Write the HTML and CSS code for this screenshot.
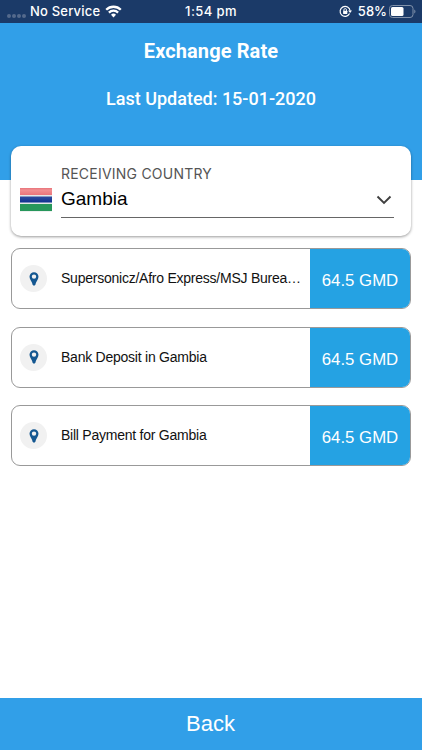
FILE: index.html
```html
<!DOCTYPE html>
<html lang="en">
<head>
    <meta charset="UTF-8">
    <meta name="viewport" content="width=device-width, initial-scale=1.0">
    <title>Exchange Rate</title>
    <link rel="stylesheet" href="styles.css">
</head>
<body>
    <div class="screen">
        <div class="status-bar">
            <div class="status-left">
                <span class="signal"><i></i><i></i><i></i><i></i></span>
                <span class="carrier">No Service</span>
                <svg class="wifi" width="17" height="13" viewBox="0 0 17 13" fill="none" stroke="#fff" stroke-width="2.3">
                    <path d="M1.2 4.8a10.3 10.3 0 0 1 14.6 0"/>
                    <path d="M3.9 7.6a6.5 6.5 0 0 1 9.2 0"/>
                    <path d="M8.5 12.4 6 9.8a3.6 3.6 0 0 1 5 0z" fill="#fff" stroke="none"/>
                </svg>
            </div>
            <div class="status-time">1:54 pm</div>
            <div class="status-right">
                <svg class="lock" width="13" height="13" viewBox="0 0 13 13" fill="none" stroke="#fff" stroke-width="1.2">
                    <path d="M10.6 8.6a5 5 0 1 1 .5-2.8"/>
                    <path d="M9.1 5.4h3.9l-1.9 2.5z" fill="#fff" stroke="none"/>
                    <rect x="4.1" y="5.8" width="4.2" height="3.2" rx=".4" fill="#fff" stroke="none"/>
                    <path d="M4.9 6V4.9a1.3 1.3 0 0 1 2.6 0V6" stroke-width=".9"/>
                </svg>
                <span class="percent">58%</span>
                <svg class="battery" width="28" height="13" viewBox="0 0 28 13">
                    <rect x=".5" y=".5" width="23.5" height="12" rx="3" fill="none" stroke="#8292ab"/>
                    <rect x="2" y="2" width="12.5" height="9" rx="1.5" fill="#fff"/>
                    <path d="M25.3 4.5c1.5.5 1.5 3.5 0 4z" fill="#8292ab"/>
                </svg>
            </div>
        </div>

        <div class="header">
            <h1 class="title">Exchange Rate</h1>
            <p class="updated">Last Updated: 15-01-2020</p>
        </div>

        <div class="country-card">
            <svg class="flag" width="34" height="26" viewBox="0 0 34 26">
                <defs>
                    <linearGradient id="red" x2="0" y2="1">
                        <stop offset="0" stop-color="#e8737a"/>
                        <stop offset=".3" stop-color="#f18f92"/>
                        <stop offset="1" stop-color="#ea757b"/>
                    </linearGradient>
                    <linearGradient id="blue" x2="0" y2="1">
                        <stop offset="0" stop-color="#2f4c9e"/>
                        <stop offset="1" stop-color="#0f3190"/>
                    </linearGradient>
                </defs>
                <rect x="1" y="1" width="32" height="23.6" fill="#e4e8e8"/>
                <rect x="1" y="1" width="32" height="7" fill="url(#red)"/>
                <rect x="1" y="9.5" width="32" height="6" fill="url(#blue)"/>
                <rect x="1" y="17" width="32" height="7" fill="#27975b"/>
            </svg>
            <div class="select">
                <span class="select-label">RECEIVING COUNTRY</span>
                <div class="select-row">
                    <span class="select-value">Gambia</span>
                    <svg width="16" height="10" viewBox="0 0 16 10" fill="none" stroke="#3f3f3f" stroke-width="1.9">
                        <path d="M1.5 1.5 8 8l6.5-6.5"/>
                    </svg>
                </div>
            </div>
        </div>

        <div class="rates">
            <div class="rate">
                <span class="pin">
                    <svg width="10" height="14" viewBox="0 0 10 14">
                        <path fill="#145791" fill-rule="evenodd" d="M5 .3A4.5 4.5 0 0 0 .5 4.700C.5 7.600 3.300 9.800 3.700 13Q5 14.200 6.300 13C6.700 9.800 9.500 7.600 9.500 4.700A4.500 4.500 0 0 0 5 .3zM5 2.400A2.200 2.200 0 1 1 5 6.800 2.200 2.200 0 0 1 5 2.400z"/>
                    </svg>
                </span>
                <span class="rate-name">Supersonicz/Afro Express/MSJ Burea…</span>
                <span class="rate-value">64.5 GMD</span>
            </div>
            <div class="rate">
                <span class="pin">
                    <svg width="10" height="14" viewBox="0 0 10 14">
                        <path fill="#145791" fill-rule="evenodd" d="M5 .3A4.5 4.5 0 0 0 .5 4.700C.5 7.600 3.300 9.800 3.700 13Q5 14.200 6.300 13C6.700 9.800 9.500 7.600 9.500 4.700A4.500 4.500 0 0 0 5 .3zM5 2.400A2.200 2.200 0 1 1 5 6.800 2.200 2.200 0 0 1 5 2.400z"/>
                    </svg>
                </span>
                <span class="rate-name">Bank Deposit in Gambia</span>
                <span class="rate-value">64.5 GMD</span>
            </div>
            <div class="rate">
                <span class="pin">
                    <svg width="10" height="14" viewBox="0 0 10 14">
                        <path fill="#145791" fill-rule="evenodd" d="M5 .3A4.5 4.5 0 0 0 .5 4.700C.5 7.600 3.300 9.800 3.700 13Q5 14.200 6.300 13C6.700 9.800 9.500 7.600 9.500 4.700A4.500 4.500 0 0 0 5 .3zM5 2.400A2.200 2.200 0 1 1 5 6.800 2.200 2.200 0 0 1 5 2.400z"/>
                    </svg>
                </span>
                <span class="rate-name">Bill Payment for Gambia</span>
                <span class="rate-value">64.5 GMD</span>
            </div>
        </div>

        <button class="back">Back</button>
    </div>
</body>
</html>
```
FILE: styles.css
```css
* {
    box-sizing: border-box;
}

body {
    margin: 0;
    background: #fff;
    font-family: "Liberation Sans", Arial, sans-serif;
    color: #111;
}

.screen {
    display: flex;
    flex-direction: column;
    height: 750px;
    overflow: hidden;
}

/* Status bar */
.status-bar {
    display: grid;
    grid-template-columns: 1fr auto 1fr;
    align-items: center;
    height: 23px;
    padding: 0 5px 0 7px;
    background: #1b3a68;
    color: #fff;
    font-family: Inter, sans-serif;
    font-size: 13px;
    font-weight: 500;
    line-height: 23px;
}

.status-left,
.status-right {
    display: flex;
    align-items: center;
}

.status-right {
    justify-content: flex-end;
}

.status-time {
    padding-right: 2px;
    letter-spacing: 0.4px;
}

.signal {
    display: flex;
    gap: 1px;
    margin: 8px 4px 0 0;
}

.signal i {
    width: 4px;
    height: 4px;
    border-radius: 50%;
    background: #54698c;
}

.carrier {
    letter-spacing: 0.2px;
}

.wifi {
    margin-left: 5px;
}

.percent {
    margin: 0 2px 0 6px;
}

/* Header */
.header {
    height: 157px;
    background: #319fe8;
    color: #fff;
    font-family: Roboto, sans-serif;
    text-align: center;
}

.title {
    margin: 0;
    padding-top: 16px;
    font-size: 20px;
    font-weight: 700;
    letter-spacing: 0.1px;
    line-height: 25px;
}

.updated {
    margin: 23px 0 0;
    font-size: 18px;
    font-weight: 500;
    line-height: 24px;
}

/* Country select */
.country-card {
    display: flex;
    align-items: flex-start;
    height: 90px;
    margin: -34px 11px 0;
    padding: 19px 17px 0 8px;
    border-radius: 10px;
    background: #fff;
    box-shadow: 0 1px 3px rgba(0, 0, 0, 0.4);
}

.flag {
    margin-top: 22px;
}

.select {
    flex: 1;
    margin-left: 8px;
    border-bottom: 1px solid #666;
}

.select-label {
    display: block;
    color: #555;
    font-family: Inter, sans-serif;
    font-size: 14px;
    letter-spacing: 0.22px;
    line-height: 17px;
}

.select-row {
    display: flex;
    justify-content: space-between;
    align-items: center;
    height: 35px;
    padding-right: 2px;
}

.select-value {
    padding-bottom: 2px;
    color: #000;
    font-size: 19px;
}

/* Rates */
.rates {
    flex: 1;
    display: flex;
    flex-direction: column;
    gap: 17.5px;
    padding: 12px 11px 0;
}

.rate {
    display: flex;
    align-items: center;
    height: 61px;
    padding-left: 8px;
    border: 1px solid #999;
    border-radius: 9px;
    overflow: hidden;
}

.pin {
    display: flex;
    justify-content: center;
    align-items: center;
    width: 27px;
    height: 27px;
    border-radius: 50%;
    background: #f1f1f1;
}

.rate-name {
    flex: 1;
    min-width: 0;
    margin: 0 5px 0 14px;
    padding-bottom: 1px;
    overflow: hidden;
    font-size: 14px;
    letter-spacing: -0.24px;
    text-overflow: ellipsis;
    white-space: nowrap;
}

.rate-value {
    width: 100px;
    height: 100%;
    padding-top: 2px;
    background: #25a2e3;
    color: #fff;
    font-size: 16.8px;
    line-height: 59px;
    text-align: center;
}

.back {
    height: 52px;
    padding: 0 1px 0 0;
    border: none;
    background: #319fe8;
    color: #fff;
    font-family: "Liberation Sans", Arial, sans-serif;
    font-size: 22px;
}
```
